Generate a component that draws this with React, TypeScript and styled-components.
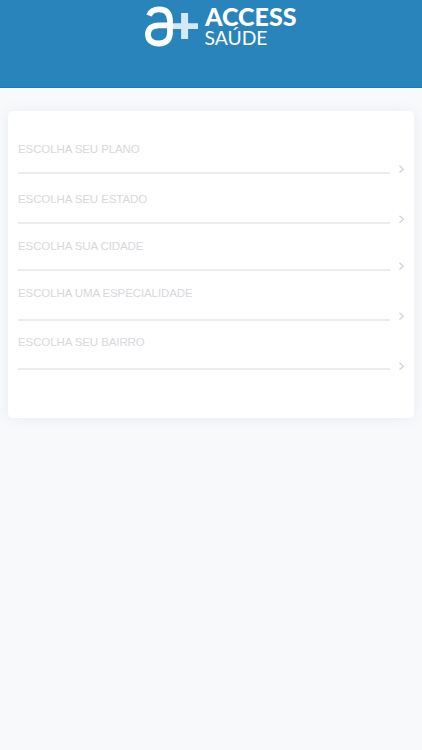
import React from "react";
import styled, { createGlobalStyle } from "styled-components";

const GlobalStyle = createGlobalStyle`
  * { box-sizing: border-box; }
  body {
    margin: 0;
    background: #f8f9fb;
    font-family: "Liberation Sans", Arial, sans-serif;
  }
`;

const Page = styled.div`
  display: flex;
  flex-direction: column;
  min-height: 100vh;
`;

const Header = styled.header`
  display: flex;
  justify-content: center;
  height: 88px;
  padding-left: 20px;
  background: #2984bb;
  border-bottom: 1px solid #2678ab;
`;

const Logo = styled.svg`
  display: block;
  width: 156px;
  height: 52px;
`;

const Card = styled.main`
  margin: 23px 8px 0;
  height: 307px;
  padding: 13px 6px 0 10px;
  background: #fff;
  border-radius: 5px;
  box-shadow: 0 1px 14px rgba(60, 100, 150, 0.09);
`;

const Field = styled.button<{ $height: number; $gap: number; $lift: number }>`
  display: flex;
  align-items: flex-end;
  width: 100%;
  height: ${(p) => p.$height}px;
  padding: 0;
  border: 0;
  background: none;
  font: inherit;
  text-align: left;

  & > span {
    flex: 1;
    padding-bottom: ${(p) => p.$gap}px;
    border-bottom: 2px solid #ebecee;
  }

  & > svg {
    flex: none;
    margin: 0 0 ${(p) => p.$lift}px 5px;
  }
`;

const Label = styled.span`
  color: #d7d8dc;
  font-size: 11.5px;
  letter-spacing: -0.1px;
  line-height: 14px;
  white-space: nowrap;
`;

const fields = [
  { label: "ESCOLHA SEU PLANO", height: 50, gap: 16, lift: -1 },
  { label: "ESCOLHA SEU ESTADO", height: 50, gap: 16, lift: -1 },
  { label: "ESCOLHA SUA CIDADE", height: 47, gap: 16, lift: -1 },
  { label: "ESCOLHA UMA ESPECIALIDADE", height: 50, gap: 19, lift: -1 },
  { label: "ESCOLHA SEU BAIRRO", height: 49, gap: 19, lift: -2 },
];

function Chevron() {
  return (
    <svg width="13" height="12" viewBox="0 0 13 12" fill="none" stroke="#d2d3d5" strokeWidth="1.3">
      <path d="M4.500 2.800 8.300 6.300 4.500 9.800" />
    </svg>
  );
}

function Brand() {
  return (
    <Logo viewBox="143 0 156 52" role="img" aria-label="Access Saúde">
      <path d="M170 23.2h11.1V13h7v10.2H198v5.800h-9.900V39h-7V29H170z" fill="#d5e9f5" />
      <path
        d="M149 15.500C151 10.500 154.500 9.300 159 9.300c7.500 0 11 4 11 12v11c0 7.500-4 11.200-11 11.200-6.500 0-11-3-11-9 0-6.200 4.500-9.200 11-9.200h11"
        fill="none"
        stroke="#fff"
        strokeWidth="5.800"
      />
      <g fill="#fff" fontFamily="Lato, sans-serif">
        <text x="205" y="26" fontSize="24" fontWeight="900" textLength="91.500" lengthAdjust="spacingAndGlyphs">
          ACCESS
        </text>
        <text x="204.500" y="44.500" fontSize="19.500" textLength="63" lengthAdjust="spacingAndGlyphs">
          SAÚDE
        </text>
      </g>
    </Logo>
  );
}

export default function App() {
  return (
    <>
      <GlobalStyle />
      <Page>
        <Header>
          <Brand />
        </Header>
        <Card>
          {fields.map((f) => (
            <Field key={f.label} type="button" $height={f.height} $gap={f.gap} $lift={f.lift}>
              <Label>{f.label}</Label>
              <Chevron />
            </Field>
          ))}
        </Card>
      </Page>
    </>
  );
}
